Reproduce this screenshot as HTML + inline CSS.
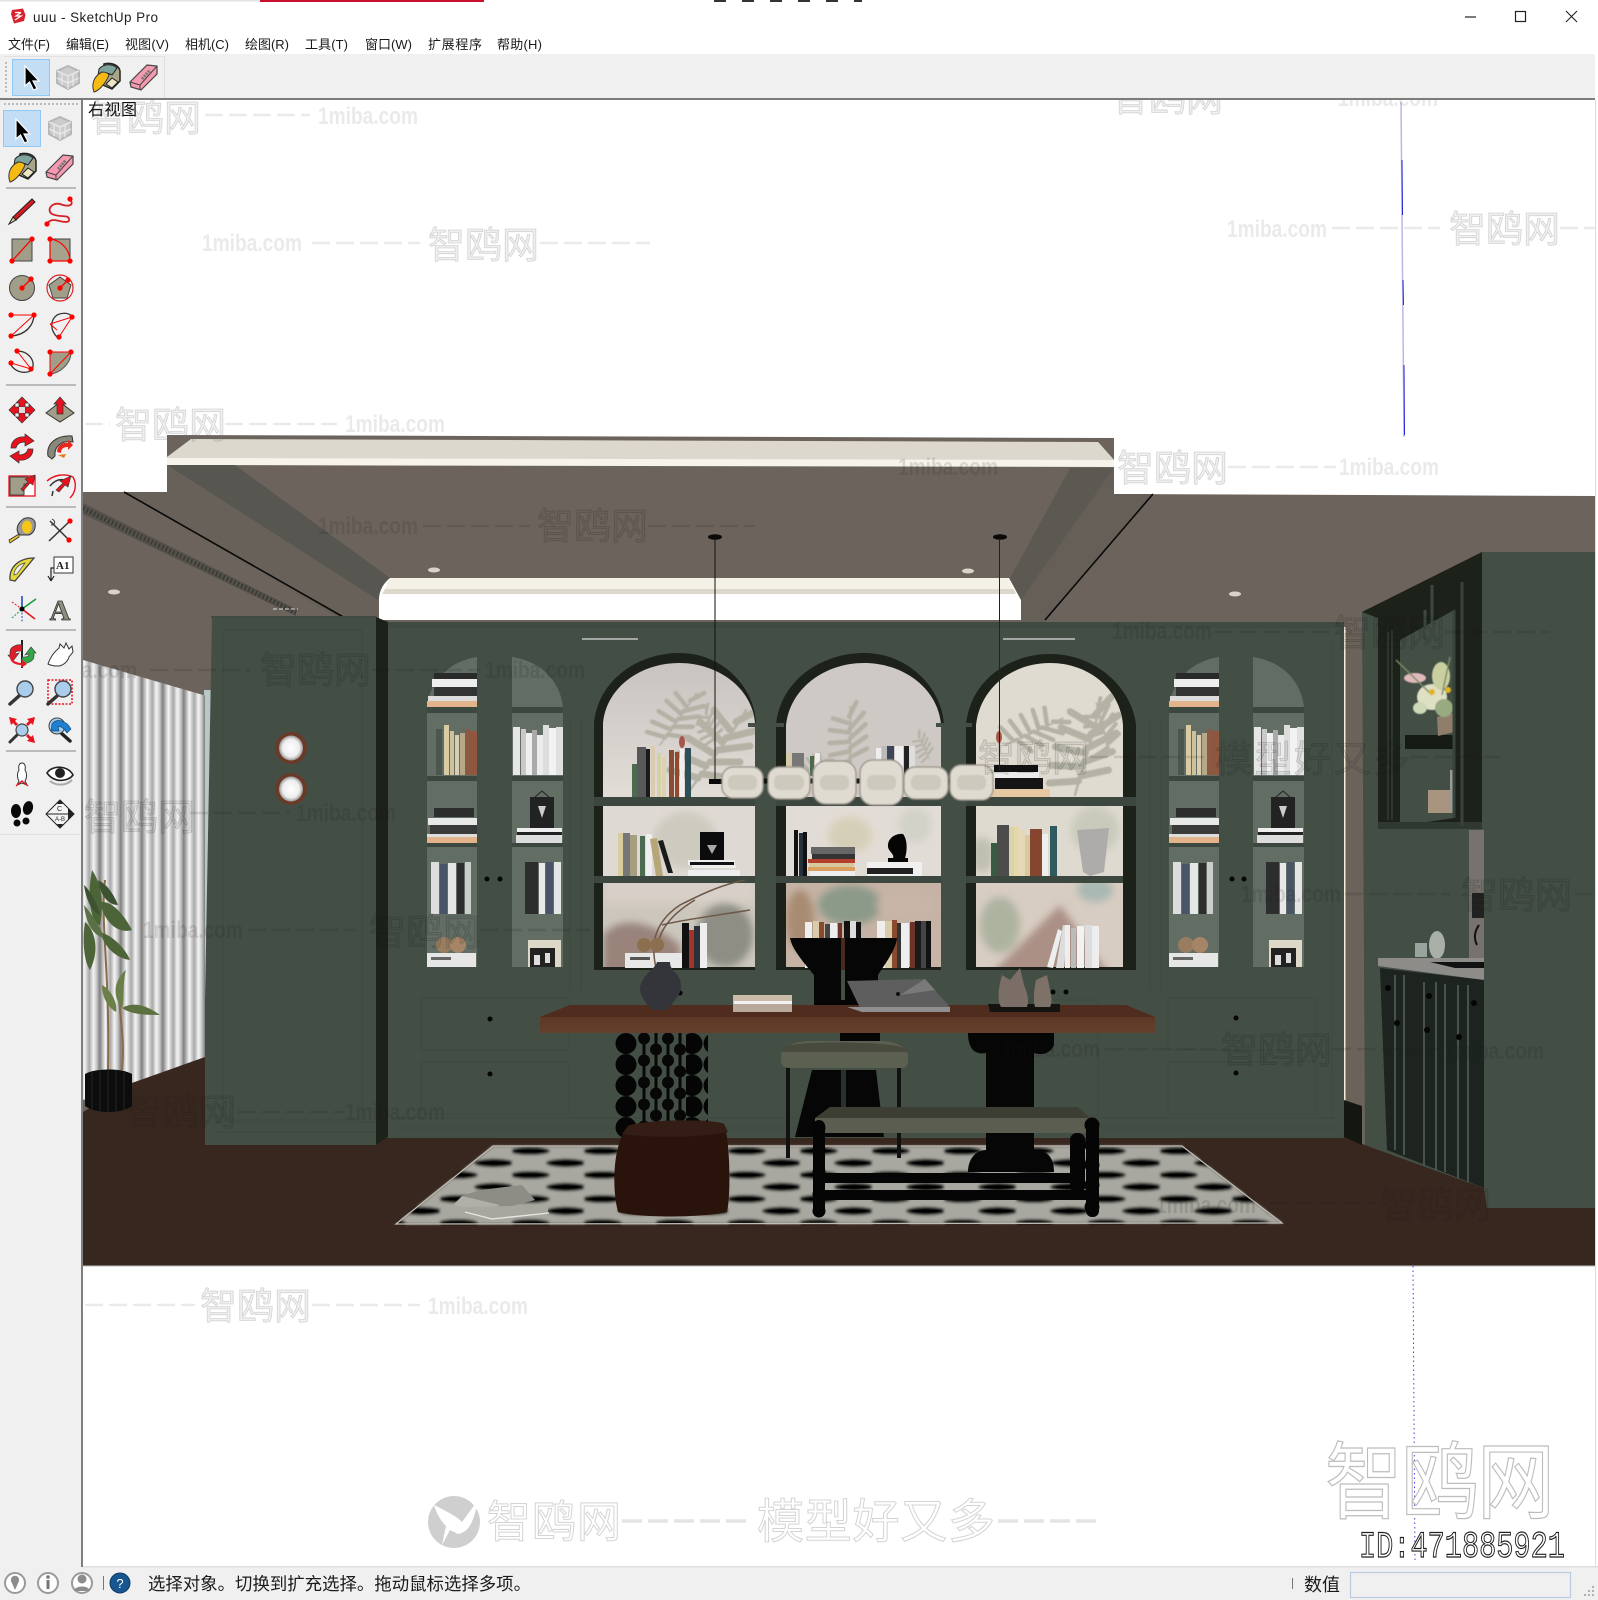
<!DOCTYPE html>
<html><head><meta charset="utf-8"><title>uuu - SketchUp Pro</title>
<style>
html,body{margin:0;padding:0;background:#fff;width:1598px;height:1600px;overflow:hidden}
svg{display:block}
text{font-family:"Liberation Sans","Noto Sans CJK SC",sans-serif}
.z{font-size:37px;fill:rgba(110,110,110,.10);stroke:rgba(110,110,110,.26);stroke-width:.8}
.m{font-size:24px;font-weight:bold;fill:rgba(90,90,90,.13)}
.d{stroke:rgba(90,90,90,.13);stroke-width:2.5;stroke-dasharray:18 6}
.dk .m{fill:rgba(25,25,25,.13)}
.dk .d{stroke:rgba(25,25,25,.13)}
.dk .z{fill:rgba(25,25,25,.05);stroke:rgba(25,25,25,.2)}
.menu{font-size:13px;fill:#1a1a1a}
</style></head><body>
<svg width="1598" height="1600" viewBox="0 0 1598 1600" xmlns="http://www.w3.org/2000/svg">
<defs>
<filter id="b05"><feGaussianBlur stdDeviation=".6"/></filter>
<filter id="b1"><feGaussianBlur stdDeviation="1.300"/></filter>
<filter id="b2"><feGaussianBlur stdDeviation="2"/></filter>
<filter id="b4"><feGaussianBlur stdDeviation="4"/></filter>
<linearGradient id="cg" x1="0" x2="1" y1="0" y2="0">
<stop offset="0" stop-color="#fbfbfb"/><stop offset=".25" stop-color="#a8a8a8"/><stop offset=".45" stop-color="#f4f4f4"/><stop offset=".6" stop-color="#c9c9c9"/><stop offset=".75" stop-color="#818181"/><stop offset="1" stop-color="#eee"/>
</linearGradient>
<pattern id="curt" width="21" height="40" patternUnits="userSpaceOnUse" patternTransform="translate(84 0)"><rect width="21" height="40" fill="url(#cg)"/></pattern>
<pattern id="rug" width="72" height="24" patternUnits="userSpaceOnUse" patternTransform="translate(8 1146)">
<rect width="72" height="24" fill="#a8a8a0"/><ellipse cx="18" cy="5" rx="20" ry="4" fill="#050505"/><ellipse cx="54" cy="17" rx="20" ry="4.200" fill="#050505"/></pattern>
<pattern id="bead" width="22" height="21" patternUnits="userSpaceOnUse" patternTransform="translate(615 1033)"><circle cx="11" cy="10.5" r="10.5" fill="#050505"/></pattern>
<pattern id="dia" width="24" height="22" patternUnits="userSpaceOnUse" patternTransform="translate(638 1033)"><circle cx="6" cy="5.5" r="6" fill="#070707"/><circle cx="18" cy="16.5" r="6" fill="#070707"/><path d="M6 0V22M18 0V22" stroke="#070707" stroke-width="3"/></pattern>
<radialGradient id="lw"><stop offset="0" stop-color="#fff"/><stop offset=".7" stop-color="#eee"/><stop offset="1" stop-color="#999"/></radialGradient>
<linearGradient id="wp1" x1="0" x2="0" y1="0" y2="1"><stop offset="0" stop-color="#c9c3c0"/><stop offset="1" stop-color="#e3ddd8"/></linearGradient>
<linearGradient id="wood" x1="0" x2="0" y1="0" y2="1"><stop offset="0" stop-color="#5d3826"/><stop offset="1" stop-color="#63402c"/></linearGradient>
<clipPath id="a1"><path d="M603 797V723C606 688 640 663 679 663C718 663 752 688 755 723V797Z"/></clipPath>
<clipPath id="a2"><path d="M786 797V725C790 688 825 663 864 663C903 663 938 688 941 725V797Z"/></clipPath>
<clipPath id="a3"><path d="M976 797V725C980 688 1012 663 1050 663C1088 663 1120 688 1123 725V797Z"/></clipPath>
<clipPath id="r1"><rect x="603" y="806" width="152" height="70"/></clipPath><clipPath id="r2"><rect x="786" y="806" width="155" height="70"/></clipPath><clipPath id="r3"><rect x="976" y="806" width="147" height="70"/></clipPath>
<clipPath id="s1"><rect x="603" y="883" width="152" height="84"/></clipPath><clipPath id="s2"><rect x="786" y="883" width="155" height="84"/></clipPath><clipPath id="s3"><rect x="976" y="883" width="147" height="84"/></clipPath>
<clipPath id="curtc"><path d="M83 660L210 697V1057L132 1083L83 1100Z"/></clipPath>
<g id="frond" fill="none" stroke="#b3b2a5" stroke-width="3.500" stroke-linecap="round"><path d="M0 0C10 -14 20 -26 28 -40" stroke-width="1.200"/><path d="M4 -6L-10 -10M8 -12L-6 -18M12 -18L-1 -26M16 -24L5 -34M20 -30L12 -40M6 -8L20 -6M10 -14L25 -14M14 -20L30 -22M18 -26L34 -30M23 -34L34 -40"/></g>
<g id="arrow"><path d="M-6-12V8L-1.500 4L2.500 12L6 10.500L2 3H8Z" fill="#000" stroke="#fff" stroke-width="1.200"/></g>
<g id="cube" fill="none"><path d="M0-11L11-6V6L0 12L-11 6V-6Z" fill="#c4c4c4" stroke="#a8a8a8" stroke-width="2"/><path d="M-11-6L0-1L11-6M0-1V12M-6-3V8M5-3V9M-11 1L0 6L11 1" stroke="#e8e8e8" stroke-width="1.300"/></g>
<g id="paint"><path d="M-2-13C5-15 13-12 14-6L14 4L6 12L-3 8Z" fill="#a8a58a" stroke="#222" stroke-width="1.500"/><path d="M-7-8C-3-13 6-14 11-9L6-2C1-5-4-4-8-1Z" fill="#7fa39d" stroke="#222"/><path d="M0 7L6 1L12 5L6 11Z" fill="#eee6c4" stroke="#222"/><path d="M-4-5C-12-1-15 7-12 15C-8 14-1 8 3-2C2-4-1-5-4-5Z" fill="#f6bb12" stroke="#333"/></g>
<g id="eraser"><path d="M-14 5L3-12L13-11L13-3L-3 13L-13 10Z" fill="#f59ab0" stroke="#444" stroke-width="1.200"/><path d="M-14 5L-4 8L13-11M-4 8V13" fill="none" stroke="#444"/><path d="M-2 2L6-7" stroke="#777" stroke-width="3" stroke-dasharray="2 1"/></g>
<g id="dot"><circle r="2.600" fill="#f00"/></g>
<g id="narrow1">
<path d="M427 967V707C430 680 450 661 477 657V967Z" fill="#626d64"/>
<rect x="434" y="673" width="43" height="6" fill="#2a2a2a"/><rect x="432" y="679" width="45" height="8" fill="#eee"/><rect x="434" y="687" width="43" height="9" fill="#333"/><rect x="428" y="696" width="49" height="5" fill="#ddd"/><rect x="427" y="701" width="50" height="6" fill="#e3b48c"/>
<rect x="427" y="707" width="50" height="6" fill="#3c473f"/>
<rect x="436" y="729" width="6" height="46" fill="#4d554f"/><rect x="444" y="725" width="5" height="50" fill="#d9cca5"/><rect x="450" y="731" width="4" height="44" fill="#cfc29a"/><rect x="455" y="735" width="4" height="40" fill="#d9cfb0"/><rect x="460" y="733" width="5" height="42" fill="#b5a98a"/><rect x="465" y="729" width="4" height="46" fill="#8a5a42"/><rect x="469" y="731" width="8" height="44" fill="#8f5640"/>
<rect x="427" y="776" width="50" height="5" fill="#3c473f"/>
<rect x="434" y="808" width="40" height="9" fill="#2d2d2d"/><rect x="428" y="818" width="49" height="7" fill="#e8e8e8"/><rect x="430" y="825" width="47" height="9" fill="#3a3a3a"/><rect x="427" y="834" width="50" height="3" fill="#ddd"/><rect x="427" y="837" width="50" height="6" fill="#e3b48c"/>
<rect x="427" y="843" width="50" height="4" fill="#3c473f"/>
<rect x="431" y="862" width="8" height="52" fill="#ddd"/><rect x="440" y="864" width="7" height="50" fill="#4a5468"/><rect x="448" y="863" width="8" height="51" fill="#e5e5e5"/><rect x="457" y="863" width="7" height="51" fill="#2d2d2d"/><rect x="465" y="862" width="6" height="52" fill="#ccc"/>
<ellipse cx="444" cy="945" rx="8" ry="8" fill="#9a7d60"/><ellipse cx="458" cy="945" rx="8" ry="8" fill="#a58566"/><rect x="427" y="953" width="49" height="14" fill="#e6e6e6"/><rect x="431" y="957" width="20" height="3" fill="#666"/>
</g>
<g id="narrow2">
<path d="M512 657C540 661 560 680 563 707V967H512Z" fill="#626d64"/>
<rect x="512" y="707" width="51" height="6" fill="#3c473f"/>
<rect x="513" y="727" width="7" height="48" fill="#e6e6e6"/><rect x="521" y="729" width="5" height="46" fill="#c9c9c9"/><rect x="526" y="733" width="6" height="42" fill="#f0f0f0"/><rect x="532" y="730" width="5" height="45" fill="#aaa"/><rect x="537" y="735" width="6" height="40" fill="#ececec"/><rect x="543" y="725" width="6" height="50" fill="#ddd"/><rect x="549" y="728" width="7" height="47" fill="#f2f2f2"/><rect x="556" y="727" width="7" height="48" fill="#e0e0e0"/>
<rect x="512" y="776" width="51" height="5" fill="#3c473f"/>
<rect x="530" y="797" width="24" height="31" fill="#222"/><path d="M535 797L542 791L549 797" fill="none" stroke="#222"/><path d="M538 806L542 818L546 806Z" fill="#ccc"/>
<rect x="517" y="828" width="45" height="4" fill="#eee"/><rect x="517" y="832" width="45" height="3" fill="#222"/><rect x="516" y="835" width="46" height="8" fill="#ddd"/>
<rect x="512" y="843" width="51" height="4" fill="#3c473f"/>
<rect x="525" y="862" width="13" height="52" fill="#2d2d2d"/><rect x="539" y="863" width="6" height="51" fill="#e8e8e8"/><rect x="546" y="862" width="7" height="52" fill="#4a5468"/><rect x="554" y="862" width="7" height="52" fill="#e5e5e5"/>
<rect x="528" y="940" width="33" height="27" fill="#ded8c8"/><rect x="530" y="948" width="25" height="19" fill="#222"/><rect x="534" y="955" width="6" height="10" fill="#ddd"/><rect x="545" y="953" width="5" height="10" fill="#ddd"/>
</g>
</defs>

<rect width="1598" height="1600" fill="#fff"/>

<!-- ===== SCENE ===== -->
<path d="M83 492H167V465H1114V494L1595 496V1266H83Z" fill="#6c645c"/>
<!-- upper trim -->
<path d="M167 435L1114 438V460L1098 442H191L167 457Z" fill="#6c645c"/>
<path d="M191 439L1098 442L1114 460H167V457Z" fill="#dcd8ce"/>
<path d="M167 458L1114 460V467L167 465Z" fill="#f6f3ea"/>
<!-- coffers -->
<path d="M167 465H235L390 578L378 600Z" fill="#585650"/>
<path d="M167 465L378 600V622H344L124 492H167Z" fill="#67615a"/>
<path d="M1114 468H1070L1009 580L1021 600Z" fill="#5c5852"/>
<path d="M1114 468V494H1153L1045 622H1021V600Z" fill="#655f58"/>
<path d="M83 503L296 609L296 616L83 514Z" fill="#54504b"/>
<path d="M83 508.500L296 612.500" fill="none" stroke="#2f2d2a" stroke-width="5" stroke-dasharray="1.500 2.500" opacity=".7"/>
<path d="M124 492L345 618" stroke="#0a0a0a" stroke-width="1.600"/>
<path d="M1153 494L1045 620" stroke="#0a0a0a" stroke-width="1.600"/>
<path d="M273 609H298" stroke="#ddd" stroke-dasharray="4 2" stroke-width="1"/>
<!-- downlights -->
<ellipse cx="434" cy="570" rx="6" ry="2.500" fill="#d8d4c8"/><ellipse cx="114" cy="592" rx="6" ry="2.500" fill="#d8d4c8"/><ellipse cx="968" cy="571" rx="6" ry="2.500" fill="#d8d4c8"/><ellipse cx="1235" cy="594" rx="6" ry="2.500" fill="#d8d4c8"/>
<!-- lower molding -->
<path d="M390 578H1009L1021 600V620H379V598Q380 586 390 578Z" fill="#fff"/>
<path d="M390 578H1009L1013 589H385Z" fill="#f4f1e7"/><path d="M385 589H1014L1016 594H382Z" fill="#dcd8cc"/>

<!-- curtain + floor -->
<rect x="204" y="690" width="8" height="370" fill="#b9c7c6"/>
<g clip-path="url(#curtc)"><rect x="83" y="650" width="122" height="450" fill="url(#curt)"/></g>
<path d="M83 1112L132 1083L205 1057V1145H376L387 1137H1344L1365 1145L1484 1188L1487 1208H1595V1266H83Z" fill="#38271f"/>

<!-- main cabinet -->
<rect x="387" y="622" width="957" height="516" fill="#434e45"/>
<path d="M387 622H1344V628H387Z" fill="#3f4a41"/>
<path d="M376 617L388 622V1137L376 1145Z" fill="#1c2119"/>
<path d="M212 617H376V1145H205V1000Z" fill="#434e45"/>
<path d="M223 630H362V1120M223 630V1120H362M212 1122H376M212 1132H376" fill="none" stroke="#3e493f" stroke-width="1"/>
<path d="M211 617H376" stroke="#3f4a41" stroke-width="2"/>
<!-- wall lights -->
<ellipse cx="291" cy="748" rx="16" ry="16" fill="#6a3a28"/><ellipse cx="291" cy="748" rx="12" ry="12.500" fill="url(#lw)"/>
<ellipse cx="291" cy="789" rx="16" ry="16" fill="#6a3a28"/><ellipse cx="291" cy="789" rx="12" ry="12.500" fill="url(#lw)"/>
<!-- panels -->
<g fill="none" stroke="#3e493f" stroke-width="1">
<rect x="421" y="998" width="148" height="52"/><rect x="421" y="1062" width="148" height="52"/>
<rect x="1168" y="998" width="148" height="52"/><rect x="1168" y="1062" width="148" height="52"/>
<rect x="1030" y="1000" width="68" height="115"/>
<path d="M395 1118H1340M395 1128H1340M570 720V990M1150 720V990M1161 720V990M581 720V990M1332 640V1120"/>
</g>
<path d="M582 639H638M1003 639H1075" stroke="#dedede" stroke-width="1.200"/>

<!-- arches: rims -->
<path d="M594 970V723C598 680 638 653 679 653C722 653 754 686 756 723V970Z" fill="#1c2119"/>
<path d="M776 970V725C780 680 822 653 864 653C908 653 942 688 944 725V970Z" fill="#1c2119"/>
<path d="M966 970V725C970 680 1010 654 1050 654C1096 654 1132 688 1136 725V970Z" fill="#1c2119"/>

<!-- wallpaper arch -->
<g clip-path="url(#a1)"><rect x="600" y="660" width="160" height="140" fill="url(#wp1)"/>
<g filter="url(#b05)"><use href="#frond" transform="translate(660 745) scale(1.300)"/><use href="#frond" transform="translate(690 790) rotate(0) scale(2)"/><use href="#frond" transform="translate(715 745) rotate(-50) scale(.8)"/></g>
<ellipse cx="682" cy="742" rx="3" ry="6" fill="#a7564a"/></g>
<g clip-path="url(#a2)"><rect x="780" y="660" width="170" height="140" fill="#cfc9c5"/>
<g filter="url(#b05)"><use href="#frond" transform="translate(850 770) rotate(-35) scale(1.300)"/><use href="#frond" transform="translate(800 775) rotate(25) scale(.7)"/><use href="#frond" transform="translate(930 760) rotate(-60) scale(.6)"/></g></g>
<g clip-path="url(#a3)"><rect x="970" y="660" width="160" height="140" fill="#e0dbd1"/>
<g filter="url(#b05)"><use href="#frond" transform="translate(1005 745) rotate(30) scale(1.300)"/><use href="#frond" transform="translate(1075 795) rotate(-20) scale(2)"/><use href="#frond" transform="translate(1110 755) rotate(-50) scale(1.100)"/></g>
<ellipse cx="999" cy="737" rx="3" ry="6" fill="#a7564a"/></g>
<!-- row 2 wallpaper -->
<rect x="603" y="806" width="152" height="70" fill="#dfd9d3"/><rect x="786" y="806" width="155" height="70" fill="#e2dcd6"/><rect x="976" y="806" width="147" height="70" fill="#dfdad0"/>
<g clip-path="url(#r1)"><g filter="url(#b4)"><ellipse cx="685" cy="840" rx="32" ry="28" fill="#cdcbc0"/></g></g>
<g clip-path="url(#r2)"><g filter="url(#b4)"><ellipse cx="850" cy="835" rx="22" ry="18" fill="#d6cfb8"/><ellipse cx="915" cy="825" rx="16" ry="18" fill="#d2d2c8"/></g></g>
<g clip-path="url(#r3)"><g filter="url(#b4)"><ellipse cx="1095" cy="830" rx="24" ry="24" fill="#cacabc"/><ellipse cx="982" cy="855" rx="12" ry="18" fill="#c0c0b0"/></g></g>
<!-- row 3 wallpaper -->
<rect x="603" y="883" width="152" height="84" fill="#ccc7bd"/><rect x="786" y="883" width="155" height="84" fill="#c6b3a5"/><rect x="976" y="883" width="147" height="84" fill="#d8cdc2"/>
<g clip-path="url(#s1)"><g filter="url(#b4)"><path d="M603 935C620 915 650 920 680 945L680 975H603Z" fill="#99837a"/><rect x="603" y="878" width="152" height="25" fill="#d8d0c8"/><ellipse cx="725" cy="935" rx="28" ry="32" fill="#8e8e84"/></g></g>
<g clip-path="url(#s2)"><g filter="url(#b4)"><ellipse cx="850" cy="905" rx="32" ry="20" fill="#8c9a8a"/><ellipse cx="800" cy="920" rx="14" ry="30" fill="#a88b72"/><ellipse cx="905" cy="905" rx="28" ry="14" fill="#c9b5a8"/></g></g>
<g clip-path="url(#s3)"><g filter="url(#b4)"><ellipse cx="1000" cy="925" rx="20" ry="28" fill="#aeb3a0"/><path d="M990 975L1060 905L1110 975Z" fill="#ab9086"/><ellipse cx="1095" cy="890" rx="18" ry="12" fill="#a9b8b2"/></g></g>
<!-- shelves & uprights -->
<rect x="594" y="797" width="162" height="9" fill="#3c473f"/><rect x="594" y="876" width="162" height="7" fill="#3c473f"/>
<rect x="776" y="797" width="168" height="9" fill="#3c473f"/><rect x="776" y="876" width="168" height="7" fill="#3c473f"/>
<rect x="966" y="797" width="170" height="9" fill="#3c473f"/><rect x="966" y="876" width="170" height="7" fill="#3c473f"/>
<rect x="755" y="723" width="21" height="247" fill="#434e45"/><rect x="941" y="723" width="25" height="247" fill="#434e45"/>
<rect x="748" y="723" width="36" height="4" fill="#434e45"/><rect x="936" y="723" width="36" height="4" fill="#434e45"/>
<rect x="1123" y="806" width="13" height="161" fill="#1c2119"/>
<!-- arch1 books -->
<g>
<rect x="632" y="764" width="5" height="33" fill="#4c6a50"/><rect x="637" y="747" width="9" height="50" fill="#585858"/><rect x="646" y="749" width="4" height="48" fill="#1a1a1a"/><rect x="651" y="746" width="4" height="51" fill="#d8ccac"/><rect x="657" y="753" width="4" height="44" fill="#d6d0a8"/><rect x="662" y="757" width="4" height="40" fill="#dcd2b0"/><rect x="669" y="750" width="5" height="47" fill="#8a4d34"/><rect x="675" y="752" width="4" height="45" fill="#8f4a30"/><rect x="680" y="749" width="4" height="48" fill="#efefef"/><rect x="685" y="748" width="6" height="49" fill="#2e4f58"/>
<rect x="786" y="753" width="6" height="24" fill="#d5c9a5"/><rect x="792" y="753" width="12" height="24" fill="#777"/><rect x="810" y="756" width="4" height="20" fill="#4c6a50"/><rect x="815" y="753" width="5" height="24" fill="#eee"/>
<rect x="876" y="748" width="5" height="30" fill="#eee"/><rect x="882" y="746" width="5" height="32" fill="#bbb"/><rect x="887" y="746" width="7" height="32" fill="#3c4658"/><rect x="895" y="746" width="8" height="34" fill="#efefef"/><rect x="904" y="746" width="5" height="34" fill="#222"/><rect x="909" y="746" width="6" height="34" fill="#ddd"/>
<rect x="994" y="765" width="44" height="7" fill="#111"/><rect x="993" y="772" width="46" height="6" fill="#ececec"/><rect x="995" y="778" width="48" height="11" fill="#151515"/><rect x="990" y="789" width="60" height="8" fill="#e5c7a2"/>
<!-- row2 -->
<rect x="618" y="833" width="5" height="43" fill="#d9cc9f"/><rect x="623" y="833" width="7" height="43" fill="#777"/><rect x="630" y="835" width="7" height="41" fill="#a59f80"/><rect x="640" y="836" width="5" height="40" fill="#4c6a50"/><rect x="646" y="834" width="6" height="42" fill="#eee"/><path d="M650 839L657 838L663 876H656Z" fill="#b7a678"/><path d="M658 841L663 840L673 873H668Z" fill="#1a1a1a"/>
<rect x="700" y="832" width="24" height="28" fill="#0c0c0c"/><path d="M707 845L712 854L717 845Z" fill="#aaa"/><path d="M688 860H735V865H688ZM692 865H736V868H692ZM688 870H740V876H688Z" fill="#eee"/><rect x="690" y="862" width="44" height="3" fill="#111"/>
<rect x="794" y="830" width="4" height="46" fill="#111"/><rect x="799" y="833" width="4" height="43" fill="#26303a"/><rect x="803" y="832" width="4" height="44" fill="#111"/>
<rect x="811" y="847" width="44" height="7" fill="#666"/><rect x="812" y="854" width="43" height="5" fill="#333"/><rect x="808" y="859" width="47" height="4" fill="#b3402c"/><rect x="809" y="863" width="45" height="4" fill="#d9c89e"/><rect x="808" y="867" width="47" height="4" fill="#d9a060"/><rect x="810" y="871" width="45" height="5" fill="#eee"/>
<path d="M888 845C888 838 896 833 903 834C908 840 907 852 905 858H908V862H888V858H893C895 854 887 851 888 845Z" fill="#050505"/><rect x="867" y="862" width="55" height="14" fill="#f0f0f0"/><rect x="867" y="868" width="46" height="6" fill="#222"/>
<rect x="991" y="843" width="6" height="33" fill="#3b5a45"/><rect x="997" y="825" width="12" height="51" fill="#4c4c4c"/><rect x="1009" y="827" width="5" height="49" fill="#dcd2a8"/><rect x="1014" y="826" width="5" height="50" fill="#e3d7ab"/><rect x="1020" y="830" width="5" height="46" fill="#e4d8b8"/><rect x="1025" y="835" width="5" height="41" fill="#d8ca9e"/><rect x="1030" y="829" width="12" height="47" fill="#86452e"/><rect x="1042" y="834" width="6" height="42" fill="#eee"/><rect x="1050" y="826" width="7" height="50" fill="#2f5a60"/>
<path d="M1077 830L1109 828L1104 872L1090 876L1083 872Z" fill="#adacaa"/>
<!-- row3 -->
<rect x="625" y="953" width="57" height="15" fill="#e7e7e7"/><rect x="630" y="957" width="20" height="3" fill="#555"/><path d="M656 968C652 950 650 925 680 905C700 895 720 885 745 880M662 925C680 920 720 915 750 910M658 945C660 930 670 915 695 900" fill="none" stroke="#6d5747" stroke-width="1.500"/>
<ellipse cx="644" cy="945" rx="7" ry="7" fill="#8c6f4e"/><ellipse cx="657" cy="945" rx="7" ry="7" fill="#8c6f4e"/>
<rect x="682" y="923" width="7" height="45" fill="#111"/><rect x="689" y="930" width="5" height="38" fill="#a33528"/><rect x="694" y="926" width="6" height="42" fill="#2a2f3a"/><rect x="700" y="923" width="7" height="45" fill="#eee"/>
<rect x="805" y="922" width="7" height="46" fill="#eee"/><rect x="813" y="921" width="6" height="47" fill="#d9ccaa"/><rect x="819" y="922" width="5" height="46" fill="#8a4a30"/><rect x="825" y="924" width="5" height="44" fill="#444"/><rect x="830" y="923" width="7" height="45" fill="#eee"/><rect x="838" y="923" width="4" height="45" fill="#6d332a"/><rect x="844" y="921" width="6" height="47" fill="#111"/><rect x="850" y="921" width="6" height="47" fill="#ddd"/><rect x="856" y="922" width="5" height="46" fill="#111"/><rect x="877" y="921" width="8" height="47" fill="#eee"/><rect x="885" y="921" width="7" height="47" fill="#d9ccaa"/><rect x="892" y="920" width="5" height="48" fill="#8a4a30"/><rect x="897" y="923" width="4" height="45" fill="#333"/><rect x="901" y="923" width="8" height="45" fill="#eee"/><rect x="910" y="922" width="5" height="46" fill="#6d332a"/><rect x="915" y="921" width="6" height="47" fill="#1a1a1a"/><rect x="921" y="921" width="5" height="47" fill="#444"/><rect x="926" y="921" width="5" height="47" fill="#111"/>
<path d="M1047 967L1058 929L1062 931L1053 968Z" fill="#eee"/><path d="M1056 968L1063 925L1068 926L1064 968Z" fill="#ddd"/><rect x="1065" y="925" width="5" height="43" fill="#eee"/><rect x="1071" y="928" width="5" height="40" fill="#bbb"/><rect x="1077" y="926" width="7" height="42" fill="#f2f2f2"/><rect x="1085" y="925" width="7" height="43" fill="#ddd"/><rect x="1092" y="926" width="7" height="42" fill="#eee"/>
</g>

<!-- narrow cabinets -->
<use href="#narrow1"/><use href="#narrow2"/>
<use href="#narrow1" x="742"/><use href="#narrow2" x="741"/>
<g fill="#050505"><circle cx="487" cy="879" r="2.500"/><circle cx="500" cy="879" r="2.500"/><circle cx="490" cy="1019" r="2.500"/><circle cx="490" cy="1074" r="2.500"/><circle cx="680" cy="993" r="2.500"/><circle cx="1232" cy="879" r="2.500"/><circle cx="1244" cy="879" r="2.500"/><circle cx="1053" cy="992" r="2.500"/><circle cx="1066" cy="992" r="2.500"/><circle cx="1236" cy="1018" r="2.500"/><circle cx="1236" cy="1073" r="2.500"/></g>

<!-- right side -->
<rect x="1344" y="627" width="18" height="500" fill="#6b635a"/>
<rect x="1344" y="627" width="1.500" height="490" fill="#f0ecd8"/>
<path d="M1344 1100L1362 1106V1145L1344 1137Z" fill="#14170f"/>
<path d="M1362 612L1482 552H1595V1208H1487L1484 1188L1365 1145Z" fill="#434e45"/>
<path d="M1362 612L1482 552V828H1378V618Z" fill="#1c2119"/>
<path d="M1400 640L1454 610V818L1400 826Z" fill="#434e45"/>
<path d="M1388 632V820M1392 630V820" stroke="#343f36" stroke-width="1.500"/>
<path d="M1425 610V640M1432 585V625" stroke="#3d483f" stroke-width="3"/>
<rect x="1378" y="822" width="104" height="7" fill="#2f3831"/>
<rect x="1405" y="735" width="49" height="14" fill="#151a14"/>
<path d="M1428 790H1454V813H1428Z" fill="#a8957f"/><rect x="1450" y="770" width="4" height="42" fill="#999"/>
<path d="M1437 717L1454 713V732L1438 736Z" fill="#8f7e6a"/>
<g filter="url(#b05)"><ellipse cx="1432" cy="697" rx="15" ry="13" fill="#dfe0c4"/><ellipse cx="1420" cy="708" rx="7" ry="6" fill="#cfd8b8"/><ellipse cx="1444" cy="708" rx="9" ry="9" fill="#98aa80"/><ellipse cx="1415" cy="678" rx="11" ry="5" fill="#e0b9ba"/><ellipse cx="1441" cy="676" rx="9" ry="14" fill="#c9cfa0"/><path d="M1396 660L1432 695M1450 657L1442 695" stroke="#7c8c66" stroke-width="1.500"/><circle cx="1432" cy="692" r="3" fill="#e3b51e"/><circle cx="1448" cy="690" r="3" fill="#e3b51e"/></g>
<path d="M1454 610V818M1462 582V826" stroke="#38433a" stroke-width="3"/>
<rect x="1469" y="830" width="15" height="130" fill="#77726e"/>
<rect x="1472" y="893" width="12" height="25" fill="#222"/><path d="M1479 925Q1472 935 1477 945" fill="none" stroke="#111" stroke-width="2"/>
<!-- counter -->
<ellipse cx="1437" cy="945" rx="8" ry="14" fill="#a9b0a7"/><rect x="1415" y="943" width="12" height="14" fill="#97a39c"/>
<path d="M1378 958H1484V980L1378 966Z" fill="#8e8c88"/><path d="M1430 962H1484V968H1455Z" fill="#111"/>
<path d="M1380 968L1484 980V1188L1387 1150Z" fill="#1d2420"/>
<g stroke="#56625a" stroke-width="1.500" fill="none"><path d="M1395 975V1150M1404 975V1155M1424 982V1165M1436 982V1170M1445 984V1172M1458 985V1178M1468 985V1182"/></g>
<g fill="#050505"><circle cx="1388" cy="988" r="3"/><circle cx="1429" cy="996" r="3"/><circle cx="1474" cy="1003" r="3"/><circle cx="1397" cy="1023" r="3"/><circle cx="1427" cy="1030" r="3"/><circle cx="1459" cy="1037" r="3"/></g>

<!-- pendants -->
<path d="M715 540V782" stroke="#111" stroke-width="1"/><path d="M999.500 540V770" stroke="#222" stroke-width="1"/>
<ellipse cx="715" cy="537" rx="7" ry="2.800" fill="#0a0a0a"/><ellipse cx="1000" cy="537" rx="7" ry="2.800" fill="#0a0a0a"/>
<rect x="709" y="779" width="14" height="5" fill="#0a0a0a"/>
<path d="M722 781H992" stroke="#0a0a0a" stroke-width="5"/>
<g filter="url(#b05)" stroke="#a09a90" stroke-width="1.500" fill="#dfdbd1">
<rect x="722" y="767" width="41" height="31" rx="11"/><rect x="768" y="767" width="42" height="32" rx="11"/><rect x="813" y="761" width="43" height="43" rx="13"/><rect x="860" y="760" width="43" height="45" rx="13"/><rect x="904" y="767" width="44" height="32" rx="11"/><rect x="950" y="765" width="43" height="35" rx="11"/>
</g>
<g filter="url(#b05)" fill="#cdc9bd"><rect x="728" y="775" width="29" height="15" rx="6"/><rect x="774" y="775" width="30" height="15" rx="6"/><rect x="820" y="775" width="29" height="15" rx="6"/><rect x="867" y="775" width="29" height="15" rx="6"/><rect x="911" y="775" width="30" height="15" rx="6"/><rect x="957" y="775" width="29" height="15" rx="6"/></g>

<!-- plant -->
<path d="M105 880C100 920 110 970 108 1070M118 985C120 1020 125 1040 122 1070" fill="none" stroke="#8a6a48" stroke-width="2"/>
<g fill="#4d6438"><path d="M92 870C86 900 92 925 100 925C104 905 102 885 92 870Z"/><path d="M100 902C112 900 124 915 132 930C120 934 105 925 100 902Z"/><path d="M85 922C95 930 100 950 90 970C84 962 82 940 85 922Z"/><path d="M100 932C114 936 126 950 130 960C116 958 105 948 100 932Z"/><path d="M84 885C90 890 98 905 100 915C92 912 86 900 84 885Z" fill="#3c5230"/><path d="M98 880C108 885 114 895 118 905C108 905 100 895 98 880Z" fill="#3c5230"/><path d="M84 905C90 912 100 925 104 938C92 935 86 922 84 905Z" fill="#5a7045"/><path d="M126 970C122 985 125 1000 122 1008C112 995 114 980 126 970Z" fill="#6b7f48"/><path d="M102 985C112 990 118 1005 116 1012C106 1006 102 995 102 985Z" fill="#6b7f48"/><path d="M122 1008C136 1000 150 1008 160 1015C146 1015 132 1015 122 1008Z" fill="#5c7040"/></g>
<path d="M85 1074C95 1068 122 1068 132 1074V1106C122 1114 95 1114 85 1106Z" fill="#0c0c0c"/>
<path d="M92 1072V1110M100 1070V1112M108 1070V1112M116 1070V1112M124 1072V1110" stroke="#232323" stroke-width="1"/>

<!-- rug -->
<g filter="url(#b1)"><path d="M493 1146H1182L1282 1223L396 1224Z" fill="url(#rug)"/></g>
<path d="M493 1146H1182L1282 1223L396 1224Z" fill="none" stroke="#bebeb6" stroke-width="1.300"/>

<!-- desk legs -->
<rect x="615" y="1033" width="22" height="105" fill="url(#bead)"/><rect x="686" y="1033" width="22" height="105" fill="url(#bead)" />
<rect x="638" y="1033" width="48" height="105" fill="url(#dia)"/>
<path d="M968 1033H1054V1045C1050 1055 1040 1055 1034 1053V1150C1045 1150 1054 1155 1054 1172H968C968 1160 975 1150 986 1150V1053C976 1055 968 1050 968 1033Z" fill="#060606"/>
<!-- chair -->
<path d="M790 938H897C896 950 884 965 878 975V1005H814V975C806 965 792 950 790 938Z" fill="#060606"/>
<rect x="841" y="938" width="4" height="32" fill="#4a2a1c"/><rect x="841" y="970" width="4" height="30" fill="#434e45"/>
<path d="M812 1070L795 1137H884L876 1070Z" fill="#060606"/><rect x="841" y="1068" width="5" height="60" fill="#434e45" opacity=".6"/>
<rect x="840" y="1033" width="40" height="12" fill="#060606"/>
<path d="M788 1056H899M788 1060V1158M899 1060V1158" stroke="#111" stroke-width="4" fill="none"/>
<path d="M781 1056C781 1046 795 1041 812 1041H880C897 1041 908 1048 908 1056V1062C908 1066 905 1068 900 1068H790C784 1068 781 1066 781 1060Z" fill="#5c6051"/>
<path d="M786 1046C800 1041 890 1041 904 1048L908 1052H781Z" fill="#474a3d"/>
<!-- desk -->
<path d="M570 1005H1126L1155 1017H540Z" fill="#4f2c1d"/>
<rect x="540" y="1017" width="615" height="16" fill="url(#wood)"/>
<!-- bench -->
<path d="M830 1107H1078L1090 1118H815Z" fill="#3c3e33"/>
<rect x="815" y="1118" width="275" height="15" fill="#5a5d4f"/>
<g fill="#050505"><rect x="813" y="1120" width="12" height="97" rx="6"/><rect x="1086" y="1120" width="13" height="97" rx="6"/><rect x="1070" y="1133" width="15" height="60" rx="7"/><rect x="825" y="1173" width="250" height="10"/><rect x="825" y="1190" width="262" height="10"/>
<circle cx="1092" cy="1125" r="7.500"/><circle cx="1092" cy="1145" r="7.500"/><circle cx="1092" cy="1165" r="7.500"/><circle cx="1092" cy="1185" r="7.500"/><circle cx="1092" cy="1207" r="7.500"/><circle cx="1077" cy="1145" r="6.500"/><circle cx="1077" cy="1165" r="6.500"/><circle cx="1077" cy="1185" r="6.500"/><circle cx="819" cy="1128" r="6.500"/><circle cx="819" cy="1150" r="6.500"/><circle cx="819" cy="1172" r="6.500"/><circle cx="819" cy="1194" r="6.500"/><circle cx="819" cy="1211" r="6.500"/></g>
<!-- ottoman -->
<path d="M628 1126C640 1120 710 1118 724 1124C730 1140 731 1195 727 1212C700 1218 640 1218 618 1212C612 1190 612 1145 628 1126Z" fill="#2a130b"/>
<path d="M628 1126C640 1120 710 1118 724 1124L728 1132C700 1138 650 1138 622 1134Z" fill="#331d14"/>
<!-- floor books -->
<path d="M462 1196L480 1190L522 1185L535 1200L490 1212Z" fill="#8d8d85"/><path d="M453 1205L462 1196L500 1205L485 1211Z" fill="#b0b0a8"/><path d="M465 1207L548 1205V1213L492 1219L464 1212Z" fill="#a7a79f"/><path d="M465 1212L492 1219L549 1213" fill="none" stroke="#e8e8e0" stroke-width="1.300"/>
<!-- desk items -->
<path d="M670 962L657 962C655 970 640 975 640 990C642 1000 648 1005 652 1010H668C672 1002 682 995 681 985C680 972 670 972 670 962Z" fill="#33353a"/>
<rect x="733" y="995" width="59" height="17" fill="#c9bba8"/><rect x="734" y="1001" width="58" height="3" fill="#f2f2f2"/><rect x="733" y="1004" width="59" height="8" fill="#b9a99a"/>
<path d="M847 981L925 979L950 1007L862 1012Z" fill="#5e5e5e"/><path d="M900 995L925 979L935 990Z" fill="#7a7a7a"/><path d="M847 1007L950 1007V1012H862Z" fill="#8f8f8f"/><circle cx="898" cy="994" r="2" fill="#111"/>
<path d="M988 1004H1060V1012H990Z" fill="#14130f"/>
<path d="M1002 975L1010 980L1020 968L1024 985C1028 995 1029 1000 1027 1007H1001C997 1000 998 990 1002 975Z" fill="#7b6e66"/>
<path d="M1036 980L1047 975L1050 990C1052 998 1052 1003 1050 1007H1035C1033 1000 1034 990 1036 980Z" fill="#7e7168"/>

<!-- viewport edges of scene -->
<path d="M83 1266H1595" stroke="#bbb" stroke-width="1"/>

<!-- blue axis -->
<path d="M1401 102L1404 437" stroke="#b8b8e8" stroke-width="1.500"/>
<path d="M1402 160L1402.500 215M1403 280L1403.500 305M1404 365L1404.500 435" stroke="#2323d8" stroke-width="1"/>
<path d="M1413 1266L1415 1562" stroke="#4040e0" stroke-width="1" stroke-dasharray="1.500 3"/>

<!-- WATERMARKS -->
<g>
<text class="z" x="90" y="131">智鸥网</text><line class="d" x1="205" x2="310" y1="115" y2="115"/><text class="m" x="318" y="124" textLength="100" lengthAdjust="spacingAndGlyphs">1miba.com</text>
<text class="m" x="202" y="251" textLength="100" lengthAdjust="spacingAndGlyphs">1miba.com</text><line class="d" x1="312" x2="420" y1="243" y2="243"/><text class="z" x="428" y="258">智鸥网</text><line class="d" x1="540" x2="650" y1="243" y2="243"/>
<text class="z" x="1112" y="111">智鸥网</text><line class="d" x1="1222" x2="1330" y1="98" y2="98"/><text class="m" x="1338" y="106" textLength="100" lengthAdjust="spacingAndGlyphs">1miba.com</text>
<text class="m" x="1227" y="237" textLength="100" lengthAdjust="spacingAndGlyphs">1miba.com</text><line class="d" x1="1332" x2="1440" y1="228" y2="228"/><text class="z" x="1449" y="242">智鸥网</text><line class="d" x1="1560" x2="1595" y1="228" y2="228"/>
<line class="d" x1="85" x2="110" y1="424" y2="424"/><text class="z" x="115" y="438">智鸥网</text><line class="d" x1="225" x2="337" y1="424" y2="424"/><text class="m" x="345" y="432" textLength="100" lengthAdjust="spacingAndGlyphs">1miba.com</text>
<text class="z" x="1117" y="481">智鸥网</text><line class="d" x1="1228" x2="1336" y1="467" y2="467"/><text class="m" x="1339" y="475" textLength="100" lengthAdjust="spacingAndGlyphs">1miba.com</text>
<line class="d" x1="85" x2="195" y1="1305" y2="1305"/><text class="z" x="200" y="1319">智鸥网</text><line class="d" x1="312" x2="420" y1="1305" y2="1305"/><text class="m" x="428" y="1314" textLength="100" lengthAdjust="spacingAndGlyphs">1miba.com</text>
</g>
<g class="dk">
<text class="m" x="898" y="475" textLength="100" lengthAdjust="spacingAndGlyphs">1miba.com</text>
<text class="m" x="318" y="534" textLength="100" lengthAdjust="spacingAndGlyphs">1miba.com</text><line class="d" x1="423" x2="530" y1="526" y2="526"/><text class="z" x="537" y="539">智鸥网</text><line class="d" x1="648" x2="755" y1="526" y2="526"/>
<text class="m" x="37" y="678" textLength="100" lengthAdjust="spacingAndGlyphs">1miba.com</text><line class="d" x1="150" x2="250" y1="670" y2="670"/><text class="z" x="260" y="683">智鸥网</text><line class="d" x1="372" x2="480" y1="670" y2="670"/><text class="m" x="485" y="678" textLength="100" lengthAdjust="spacingAndGlyphs">1miba.com</text>
<text class="m" x="1112" y="639" textLength="100" lengthAdjust="spacingAndGlyphs">1miba.com</text><line class="d" x1="1215" x2="1330" y1="632" y2="632"/><text class="z" x="1334" y="646">智鸥网</text><line class="d" x1="1445" x2="1550" y1="632" y2="632"/>
<text class="z" x="978" y="771">智鸥网</text><line class="d" x1="1090" x2="1210" y1="757" y2="757"/><text class="z" x="1215" y="772" textLength="195">模型好又多</text><line class="d" x1="1410" x2="1500" y1="757" y2="757"/>
<text class="z" x="84" y="830">智鸥网</text><line class="d" x1="190" x2="290" y1="813" y2="813"/><text class="m" x="296" y="821" textLength="100" lengthAdjust="spacingAndGlyphs">1miba.com</text>
<text class="m" x="143" y="938" textLength="100" lengthAdjust="spacingAndGlyphs">1miba.com</text><line class="d" x1="248" x2="355" y1="930" y2="930"/><text class="z" x="369" y="945">智鸥网</text><line class="d" x1="480" x2="590" y1="930" y2="930"/>
<text class="m" x="1241" y="902" textLength="100" lengthAdjust="spacingAndGlyphs">1miba.com</text><line class="d" x1="1345" x2="1450" y1="894" y2="894"/><text class="z" x="1461" y="908">智鸥网</text><line class="d" x1="1575" x2="1595" y1="894" y2="894"/>
<text class="z" x="125" y="1125">智鸥网</text><line class="d" x1="238" x2="345" y1="1112" y2="1112"/><text class="m" x="345" y="1120" textLength="100" lengthAdjust="spacingAndGlyphs">1miba.com</text>
<text class="m" x="1000" y="1057" textLength="100" lengthAdjust="spacingAndGlyphs">1miba.com</text><line class="d" x1="1105" x2="1215" y1="1049" y2="1049"/><text class="z" x="1221" y="1063">智鸥网</text><line class="d" x1="1333" x2="1440" y1="1049" y2="1049"/><text class="m" x="1444" y="1059" textLength="100" lengthAdjust="spacingAndGlyphs">1miba.com</text>
<text class="m" x="1156" y="1213" textLength="100" lengthAdjust="spacingAndGlyphs">1miba.com</text><line class="d" x1="1270" x2="1375" y1="1203" y2="1203"/><text class="z" x="1380" y="1218">智鸥网</text>
</g>

<!-- bottom big watermark -->
<circle cx="454" cy="1522" r="26" fill="#cfcfcf"/>
<path d="M434 1505C448 1512 456 1516 462 1522L478 1500C474 1520 470 1532 458 1534L450 1530L442 1545L446 1526C440 1520 436 1512 434 1505Z" fill="#fff"/>
<g fill="#fff" stroke="#d4d4d4" stroke-width="1">
<text x="487" y="1537" font-size="44" textLength="134">智鸥网</text>
<text x="757" y="1538" font-size="47" textLength="238">模型好又多</text>
</g>
<path d="M622 1521H752" stroke="#e4e4e4" stroke-width="3.500" stroke-dasharray="20 6"/>
<path d="M998 1521H1100" stroke="#e4e4e4" stroke-width="3.500" stroke-dasharray="20 6"/>
<!-- lower right watermark -->
<g fill="#fff" stroke="#bdbdbd" stroke-width="1.100" transform="translate(1325 1512) scale(1 1.080)">
<text x="0" y="0" font-size="78" textLength="230">智鸥网</text>
</g>
<g transform="translate(1359 1557) scale(1 1.300)"><text x="0" y="0" font-size="28.600" fill="#fff" stroke="#222" stroke-width=".9" style="font-family:'Liberation Mono',monospace">ID:471885921</text></g>

<!-- ===== CHROME ===== -->
<rect x="0" y="0" width="1598" height="54" fill="#fff"/>
<rect x="0" y="0" width="260" height="1.500" fill="#e4e4e4"/><rect x="260" y="0" width="224" height="2" fill="#c8102e"/>
<path d="M714 1H862" stroke="#333" stroke-width="2" stroke-dasharray="12 16"/>
<g transform="translate(18 16)"><path d="M-6-6L5-7.500L7.500-1L6 5L-4 7.500L-7-2Z" fill="#d8222d"/><path d="M-3-3.500H3M3-3.500L-2 0H3L-3 4" stroke="#fff" stroke-width="1.300" fill="none"/></g>
<text x="33" y="22" font-size="13.500" fill="#222" textLength="125">uuu - SketchUp Pro</text>
<g class="menus">
<text class="menu" x="8" y="49" textLength="42">文件(F)</text>
<text class="menu" x="66" y="49" textLength="43">编辑(E)</text>
<text class="menu" x="125" y="49" textLength="44">视图(V)</text>
<text class="menu" x="185" y="49" textLength="44">相机(C)</text>
<text class="menu" x="245" y="49" textLength="44">绘图(R)</text>
<text class="menu" x="305" y="49" textLength="43">工具(T)</text>
<text class="menu" x="365" y="49" textLength="47">窗口(W)</text>
<text class="menu" x="428" y="49" textLength="54">扩展程序</text>
<text class="menu" x="497" y="49" textLength="45">帮助(H)</text>
</g>
<path d="M1465 17H1476" stroke="#222" stroke-width="1.200"/>
<rect x="1515.500" y="11.500" width="10" height="10" fill="none" stroke="#222" stroke-width="1.200"/>
<path d="M1566 11L1577 22M1577 11L1566 22" stroke="#222" stroke-width="1.100"/>

<rect x="0" y="54" width="1598" height="44" fill="#f0f0f0"/>
<rect x="0" y="98" width="1598" height="2" fill="#7c7c7c"/>
<rect x="164" y="56" width="1" height="42" fill="#e0e0e0"/><rect x="3" y="56" width="161" height="1" fill="#e2e2e2"/>
<path d="M6 62V94" stroke="#bbb" stroke-width="2" stroke-dasharray="2 2"/>
<rect x="12.500" y="59.500" width="37" height="36" fill="#c2ddf4" stroke="#90c8f6"/>
<use href="#arrow" x="31" y="78"/><use href="#cube" x="68" y="77" opacity=".8"/><use href="#paint" x="106" y="77"/><use href="#eraser" x="144" y="77"/>
<path d="M1597 60V68" stroke="#111" stroke-width="2"/>

<!-- left toolbar -->
<rect x="0" y="100" width="81" height="1467" fill="#f0f0f0"/>
<rect x="81" y="100" width="2" height="1467" fill="#7f7f7f"/>
<path d="M4 104H78" stroke="#bbb" stroke-width="2" stroke-dasharray="2 2"/>
<rect x="3.500" y="110.500" width="37" height="36" fill="#c2ddf4" stroke="#90c8f6"/>
<use href="#arrow" x="22" y="131"/><use href="#cube" x="60" y="128" opacity=".8"/>
<use href="#paint" x="22" y="167"/><use href="#eraser" x="60" y="167"/>
<g stroke="#a8a8a8" stroke-width="1.500"><path d="M6 188H76M6 385H76M6 507H76M6 630H76M6 751H76"/></g>

<!-- pencil -->
<g transform="translate(22 212)"><path d="M10-13L13-10L-6 8L-9 5Z" fill="#d61b22" stroke="#222"/><path d="M-9 5L-6 8L-13 12Z" fill="#d8c8a0" stroke="#222"/></g>
<!-- freehand -->
<g transform="translate(60 212)" fill="none"><path d="M10-13C15-6 8-5 0-8C-8-10-14-2-8 2C0 6 8 2 9 7C10 13-2 8-6 8C-10 8-12 10-13 12" stroke="#d62028" stroke-width="1.800"/><use href="#dot" x="10" y="-13"/><use href="#dot" x="-13" y="12"/></g>
<!-- rect -->
<g transform="translate(22 250)"><rect x="-10" y="-11" width="20" height="22" fill="#a09e88" stroke="#444"/><path d="M-10 11L10-11" stroke="#f00" stroke-width="1.300"/><use href="#dot" x="10" y="-11"/><use href="#dot" x="-10" y="11"/></g>
<g transform="translate(60 250)"><rect x="-10" y="-11" width="20" height="22" fill="#a09e88" stroke="#444"/><path d="M-10-11V11H10C10 0 1-10-10-11Z" fill="#a5a38e" stroke="#f00" stroke-width="1.200"/><use href="#dot" x="-10" y="-11"/><use href="#dot" x="-10" y="11"/><use href="#dot" x="10" y="11"/></g>
<!-- circle / polygon -->
<g transform="translate(22 288)"><circle r="12.500" fill="#a09e88" stroke="#444"/><path d="M0 0L9-9" stroke="#f00" stroke-width="1.300"/><use href="#dot"/><use href="#dot" x="9" y="-9"/></g>
<g transform="translate(60 288)"><circle r="13" fill="none" stroke="#e02020" stroke-width="1.200"/><path d="M0-11L11-3L7 10H-7L-11-3Z" fill="#a09e88" stroke="#444"/><path d="M0 0L8-8" stroke="#f00" stroke-width="1.300"/><use href="#dot"/><use href="#dot" x="8" y="-8"/></g>
<!-- arcs -->
<g transform="translate(22 325)" fill="none"><path d="M-11 11C4 10 12 0 12-11" stroke="#333" stroke-width="1.300"/><path d="M-11-10H12M12-10L-11 11" stroke="#f00" stroke-width="1"/><use href="#dot" x="-11" y="-10"/><use href="#dot" x="12" y="-10"/><use href="#dot" x="-11" y="11"/></g>
<g transform="translate(60 325)" fill="none"><path d="M-3 12C-10 5-10-5-3-10C3-13 10-12 12-8" stroke="#333" stroke-width="1.300"/><path d="M-10-1L12-8L-1 12M-10-1L-3 5" stroke="#f00" stroke-width="1"/><use href="#dot" x="12" y="-8"/><use href="#dot" x="-1" y="12"/></g>
<g transform="translate(22 362)" fill="none"><path d="M-5-11C6-11 14-2 10 8C4 12-6 11-11 3" stroke="#333" stroke-width="1.300"/><path d="M-5-11L9 7L-11 1" stroke="#f00" stroke-width="1"/><use href="#dot" x="-5" y="-11"/><use href="#dot" x="9" y="7"/><use href="#dot" x="-11" y="1"/></g>
<g transform="translate(60 362)"><path d="M-10-10H11C11 2 0 11-10 12Z" fill="#a09e88" stroke="#555"/><path d="M-10 12L11-10M-10-10H11M-10-10V12" stroke="#f00" stroke-width="1" fill="none"/><use href="#dot" x="-10" y="-10"/><use href="#dot" x="11" y="-10"/><use href="#dot" x="-10" y="12"/></g>
<!-- move -->
<g transform="translate(22 410)"><path d="M0-13L6-7H3V-3H-3V-7H-6ZM0 13L6 7H3V3H-3V7H-6ZM-13 0L-7-6V-3H-3V3H-7V6ZM13 0L7-6V-3H3V3H7V6Z" fill="#e8121e" stroke="#333" stroke-width=".7"/><rect x="-3" y="-3" width="6" height="6" fill="#ddd"/></g>
<!-- pushpull -->
<g transform="translate(60 410)"><path d="M-14 3L0-8L14 3L0 12Z" fill="#a09e88" stroke="#333"/><path d="M0-13L6-6H3V4H-3V-6H-6Z" fill="#e8121e" stroke="#333" stroke-width=".7"/></g>
<!-- rotate -->
<g transform="translate(22 448)" fill="none" stroke="#333" stroke-width=".7"><path d="M-11 0C-11-8-4-12 3-11L3-14L12-7L3-2V-6C-2-6-5-4-6 0Z" fill="#e8121e"/><path d="M11 1C11 9 4 13-3 12L-3 15L-12 8L-3 3V7C2 7 5 5 6 1Z" fill="#e8121e"/></g>
<!-- follow me -->
<g transform="translate(60 448)"><path d="M-12 8C-14-4-4-13 12-12L13-6C2-8-6-2-5 8L-8 11Z" fill="#8a887a" stroke="#333"/><path d="M-3 4C-3-3 3-6 8-5L8-8L13-3L8 2V-1C3-1 1 1 1 5Z" fill="#e8281e"/><path d="M-2 7L6 6L4 10Z" fill="#e57a1e"/></g>
<!-- scale -->
<g transform="translate(22 486)"><rect x="-13" y="-10" width="26" height="20" fill="#fff" stroke="#e8121e" stroke-width="1.300"/><path d="M-12-9H6V-2H2V9H-12Z" fill="#a09e88" stroke="#444"/><path d="M-1 3L6-4L3-7L13-11L11-1L8-3L1 5Z" fill="#e8121e" stroke="#333" stroke-width=".6"/></g>
<!-- offset -->
<g transform="translate(60 486)"><path d="M-13-5C-6-11 4-13 13-9C18 0 14 8 10 12" fill="none" stroke="#e8121e" stroke-width="1.400"/><path d="M-10 0C-5-6 0-7 4-6M-7 5L-8 10" fill="none" stroke="#333" stroke-width="1.500"/><path d="M-4 4L3-3L0-5L11-10L8 1L5-1L-1 6Z" fill="#e8121e" stroke="#333" stroke-width=".6"/></g>
<!-- tape -->
<g transform="translate(22 530)"><path d="M-1-9C3-14 11-13 13-8C14-2 12 3 7 5H-2C-6 2-6-4-1-9Z" fill="#999" stroke="#333"/><ellipse cx="5" cy="-3" rx="5" ry="6.500" fill="#f5c518"/><path d="M-13 10L-3 4V7L-12 13Z" fill="#e5c030" stroke="#333" stroke-width=".8"/></g>
<!-- dimension -->
<g transform="translate(60 530)" fill="none"><path d="M-11 11L10-9M-10-9L9 10" stroke="#333" stroke-width="1.500"/><path d="M-8-11C-3-8-6-5-9-5" stroke="#333"/><use href="#dot" x="10" y="-9"/><use href="#dot" x="9" y="10"/></g>
<!-- protractor -->
<g transform="translate(22 570)"><path d="M-12 10C-13-3-3-12 12-12L-7 11Z" fill="#e6d93a" stroke="#444" stroke-width="1.300"/><path d="M-8 5C-8-1-3-6 3-7L-5 4Z" fill="#f0f0f0" stroke="#444" stroke-width=".7"/></g>
<!-- text -->
<g transform="translate(60 570)"><rect x="-6" y="-13" width="19" height="16" fill="#fff" stroke="#333"/><text x="-4" y="-1" font-size="11" font-weight="bold" fill="#222" style="font-family:'Liberation Serif',serif">A1</text><path d="M-9 11V-2H-6M-9 11L-12 6M-9 11L-6 6" fill="none" stroke="#222" stroke-width="1.200"/></g>
<!-- axes -->
<g transform="translate(22 609)" fill="none"><path d="M-10-7L0 0" stroke="#e8121e" stroke-dasharray="2 1.500"/><path d="M0 0L13 10" stroke="#e8121e" stroke-width="1.600"/><path d="M-10 9L0 0" stroke="#1b9a3a" stroke-dasharray="2 1.500"/><path d="M0 0L14-10" stroke="#1b9a3a" stroke-width="1.600"/><path d="M0-13V0" stroke="#1f4fbf" stroke-width="1.600"/><path d="M0 0V13" stroke="#1f4fbf" stroke-dasharray="2 1.500"/><circle r="2.500" fill="#000"/></g>
<!-- 3d text -->
<text x="60" y="620" text-anchor="middle" font-size="29" font-weight="bold" fill="#8f8d7d" stroke="#333" stroke-width=".8" style="font-family:'Liberation Serif',serif">A</text>
<!-- orbit -->
<g transform="translate(22 654)"><path d="M0-14V14" stroke="#222" stroke-width="2"/><path d="M-12-2C-12-8-4-10 0-9V-3C-4-3-7-3-7 0L-3-1L-9 7L-14 1H-12Z" fill="#e01e28" stroke="#333" stroke-width=".6"/><path d="M12 2C12 8 4 10 0 9V3C4 3 7 3 7 0L3 1L9-7L14-1H12Z" fill="#33a64a" stroke="#333" stroke-width=".6"/><path d="M-12 1C-12 6-5 9 0 9L-1 5L5 10L-1 14V11C-7 11-13 8-12 1Z" fill="#e01e28"/></g>
<!-- pan -->
<g transform="translate(60 654)"><path d="M-12 10C-10 4-6-2-1-6L0-10L4-6L6-11L9-5L12-8L13-2L9 3C8 7 4 11-1 12C-5 12-8 12-12 10Z" fill="#fff" stroke="#333" stroke-width="1"/></g>
<!-- zoom -->
<g transform="translate(22 692)"><path d="M-3 4L-12 12" stroke="#333" stroke-width="3.500" stroke-linecap="round"/><circle cx="3" cy="-3" r="8" fill="#a9cdea" stroke="#444" stroke-width="1.400"/></g>
<g transform="translate(60 692)"><rect x="-12" y="-12" width="24" height="24" fill="none" stroke="#e8121e" stroke-width="1.500" stroke-dasharray="2 1.500"/><path d="M-3 4L-12 12" stroke="#333" stroke-width="3.500" stroke-linecap="round"/><circle cx="3" cy="-3" r="8" fill="#a9cdea" stroke="#444" stroke-width="1.400"/></g>
<!-- zoom extents -->
<g transform="translate(22 730)"><path d="M-4 4L-12 12" stroke="#333" stroke-width="3" stroke-linecap="round"/><circle r="6" fill="#a9cdea" stroke="#444" stroke-width="1.200"/><path d="M-13-13L-5-11L-7-9L-4-6L-6-4L-9-7L-11-5ZM13-13L5-11L7-9L4-6L6-4L9-7L11-5ZM13 13L5 11L7 9L4 6L6 4L9 7L11 5Z" fill="#e8121e"/></g>
<!-- previous -->
<g transform="translate(60 730)"><path d="M0 2L10 11" stroke="#222" stroke-width="3.500" stroke-linecap="round"/><circle cx="-3" cy="-4" r="8" fill="#a9cdea" stroke="#444"/><path d="M-8-6C-4-12 6-10 11-1L7 3C3-3 0-4-2-3L-1 1L-9 1Z" fill="#1f7fd0" stroke="#134e80" stroke-width=".7"/></g>
<!-- position camera -->
<g transform="translate(22 775)"><path d="M0-12C3-12 4-8 3-5C5-2 5 3 3 6L5 10L0 8L-5 10L-3 6C-5 3-5-2-3-5C-4-8-3-12 0-12Z" fill="#fff" stroke="#333"/><path d="M-6 11L0 6L6 11" fill="none" stroke="#e8121e" stroke-width="1.300"/></g>
<!-- look around -->
<g transform="translate(60 775)"><path d="M-13-2C-8-10 8-10 13 0C9 6-5 9-13-2Z" fill="#fff" stroke="#222" stroke-width="1.600"/><circle cy="-2" r="5" fill="#222"/><path d="M-10 6C-4 11 6 11 12 5" stroke="#aaa" stroke-width="2" fill="none"/></g>
<!-- walk -->
<g transform="translate(22 814)" fill="#0a0a0a"><ellipse cx="-6" cy="-3" rx="5" ry="7"/><ellipse cx="-5" cy="9" rx="3.500" ry="3.500"/><ellipse cx="6" cy="-6" rx="5" ry="7" transform="rotate(15 6 -6)"/><ellipse cx="4" cy="7" rx="3.500" ry="3.500"/></g>
<!-- section -->
<g transform="translate(60 814)"><path d="M0-14L14 0L0 14L-14 0Z" fill="#f4f4f4" stroke="#222"/><path d="M-14 0H14" stroke="#222"/><path d="M8-6L14 0L8 6Z" fill="#222"/><path d="M0-14L-3-10H3ZM0 14L-3 10H3Z" fill="#222"/><text x="-3" y="-3" font-size="7" fill="#222">C</text><text x="-5" y="7" font-size="6" fill="#222">A-B</text></g>
<rect x="0" y="834" width="80" height="1" fill="#e0e0e0"/>

<!-- right edge -->
<rect x="1595" y="54" width="3" height="1514" fill="#fff"/>
<rect x="1595" y="100" width="1" height="1468" fill="#dcdcdc"/>

<!-- status bar -->
<rect x="0" y="1567" width="1598" height="33" fill="#f0f0f0"/>
<rect x="83" y="1566" width="1515" height="1.500" fill="#dedede"/>
<g fill="#fff" stroke="#9a9a9a" stroke-width="2"><circle cx="15" cy="1583" r="10"/><circle cx="48" cy="1583" r="10"/><circle cx="82" cy="1583" r="10"/></g>
<path d="M15 1590L11 1581C10 1574 20 1574 19 1581Z" fill="#8c8c8c"/><circle cx="48" cy="1577" r="1.800" fill="#777"/><rect x="46.500" y="1580" width="3" height="9" fill="#777"/>
<circle cx="82" cy="1579" r="4.500" fill="#8c8c8c"/><path d="M74 1591C75 1585 89 1585 90 1591Z" fill="#8c8c8c"/>
<path d="M103.500 1576V1590" stroke="#777"/>
<circle cx="120" cy="1583" r="10" fill="#17568f" stroke="#0d3a63"/><text x="120" y="1588" text-anchor="middle" font-size="13" fill="#fff">?</text>
<text x="148" y="1590" font-size="17.400" fill="#1b1b1b" textLength="383">选择对象。切换到扩充选择。拖动鼠标选择多项。</text>
<path d="M1292.500 1578V1589" stroke="#777"/>
<text x="1304" y="1591" font-size="18" fill="#1b1b1b" textLength="36">数值</text>
<rect x="1350.500" y="1572.500" width="220" height="25" fill="#f0f0f0" stroke="#b8cbe0" stroke-width="1.200"/>
<g fill="#b0b0b0"><rect x="1592" y="1586" width="2" height="2"/><rect x="1592" y="1590" width="2" height="2"/><rect x="1592" y="1594" width="2" height="2"/><rect x="1588" y="1590" width="2" height="2"/><rect x="1588" y="1594" width="2" height="2"/><rect x="1584" y="1594" width="2" height="2"/></g>

<!-- view label -->
<text x="88" y="115" font-size="16" fill="#111" textLength="49">右视图</text>
</svg>
</body></html>
